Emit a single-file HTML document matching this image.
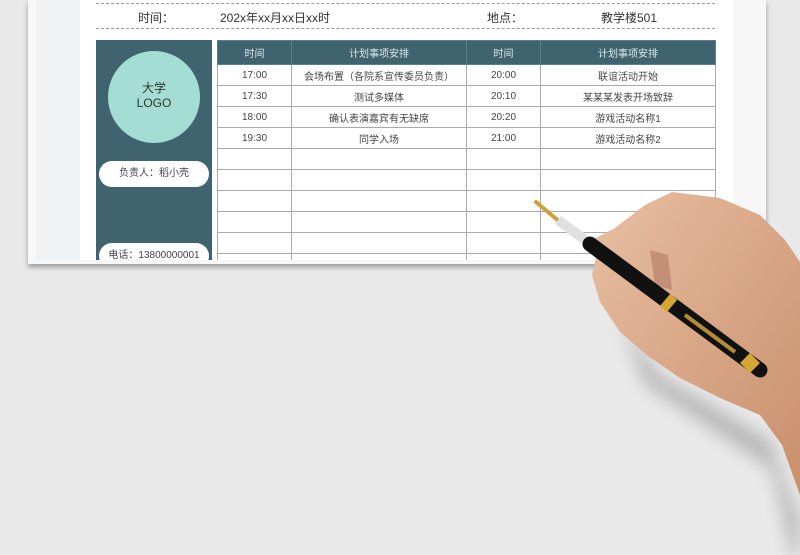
<!DOCTYPE html>
<html><head><meta charset="utf-8"><style>
*{margin:0;padding:0;box-sizing:border-box}
body{width:800px;height:555px;overflow:hidden;background:#e9e9e9;font-family:"Liberation Sans","Noto Sans CJK SC",sans-serif;position:relative}
.paper{position:absolute;left:28px;top:0;width:738px;height:264px;background:#f7f7f7;box-shadow:0 3px 5px rgba(0,0,0,.35)}
.inner{position:absolute;left:36px;top:0;width:697px;height:260px;background:#eef2f5}
.content{position:absolute;left:80px;top:0;width:653px;height:260px;background:#fff}
.dash{position:absolute;left:96px;width:619px;border-top:1px dashed #999}
.t{position:absolute;font-size:12px;color:#333;top:9px}
.lp{position:absolute;left:96px;top:40px;width:116px;height:220px;background:#3f6470;overflow:hidden}
.circ{position:absolute;left:12px;top:11px;width:92px;height:92px;border-radius:50%;background:#a4ddd3;text-align:center;font-size:12px;color:#333;padding-top:30px;line-height:15px}
.pill{position:absolute;left:3px;width:110px;height:26px;border-radius:13px;background:#fff;font-size:10px;color:#444;text-align:center;line-height:26px}
table{position:absolute;left:217px;top:40px;border-collapse:collapse;font-size:10px;color:#444}
td,th{border:1px solid #aaa;text-align:center;height:21px;padding:0}
th{background:#3f6470;color:#dfe8ea;font-weight:normal;height:24px;border-color:#5d7f89}
.tw{position:absolute;left:217px;top:40px;width:499px;height:220px;overflow:hidden}
</style></head><body>
<div class="paper"></div>
<div class="inner"></div>
<div class="content"></div>
<div class="dash" style="top:3px"></div>
<div class="dash" style="top:28px"></div>
<div class="t" style="left:138px">时间：</div>
<div class="t" style="left:220px">202x年xx月xx日xx时</div>
<div class="t" style="left:487px">地点：</div>
<div class="t" style="left:601px">教学楼501</div>
<div class="lp">
<div class="circ">大学<br>LOGO</div>
<div class="pill" style="top:121px">负责人：稻小壳</div>
<div class="pill" style="top:203px">电话：13800000001</div>
</div>
<div class="tw"><table style="left:0;top:0">
<tr><th style="width:74px">时间</th><th style="width:175px">计划事项安排</th><th style="width:74px">时间</th><th style="width:175px">计划事项安排</th></tr>
<tr><td>17:00</td><td>会场布置（各院系宣传委员负责）</td><td>20:00</td><td>联谊活动开始</td></tr>
<tr><td>17:30</td><td>测试多媒体</td><td>20:10</td><td>某某某发表开场致辞</td></tr>
<tr><td>18:00</td><td>确认表演嘉宾有无缺席</td><td>20:20</td><td>游戏活动名称1</td></tr>
<tr><td>19:30</td><td>同学入场</td><td>21:00</td><td>游戏活动名称2</td></tr>
<tr><td></td><td></td><td></td><td></td></tr>
<tr><td></td><td></td><td></td><td></td></tr>
<tr><td></td><td></td><td></td><td></td></tr>
<tr><td></td><td></td><td></td><td></td></tr>
<tr><td></td><td></td><td></td><td></td></tr>
<tr><td></td><td></td><td></td><td></td></tr>
</table></div>
<svg width="800" height="555" style="position:absolute;left:0;top:0">
<defs><filter id="b"><feGaussianBlur stdDeviation="8"/></filter>
<linearGradient id="sk" x1="0" y1="0" x2="1" y2="1"><stop offset="0" stop-color="#e8bfa2"/><stop offset="1" stop-color="#c98f6c"/></linearGradient></defs>
<path d="M620,320 L660,375 L720,410 L770,440 L800,520 L800,555 L792,555 L772,470 L705,425 L645,385Z" fill="#000" opacity=".2" filter="url(#b)"/>
<path d="M592,240 L615,228 L645,205 L672,192 L720,198 L760,215 L785,240 L800,262 L800,495 L782,445 L760,415 L720,398 L680,378 L648,356 L620,332 L600,302 L592,275 L596,258Z" fill="url(#sk)"/>
<path d="M650,250 L668,255 L672,290 L655,285Z" fill="#a8705a" opacity=".5"/>
<line x1="536" y1="202" x2="560" y2="222" stroke="#c9a23a" stroke-width="4" stroke-linecap="round"/>
<line x1="558" y1="220" x2="592" y2="245" stroke="#e0e0e0" stroke-width="10"/>
<line x1="590" y1="244" x2="760" y2="370" stroke="#111" stroke-width="15" stroke-linecap="round"/>
<line x1="665" y1="300" x2="672" y2="306" stroke="#d4a632" stroke-width="16"/>
<line x1="685" y1="315" x2="735" y2="352" stroke="#b48c36" stroke-width="4"/>
<line x1="745" y1="358" x2="755" y2="368" stroke="#d4a632" stroke-width="14"/>
</svg>
</body></html>
